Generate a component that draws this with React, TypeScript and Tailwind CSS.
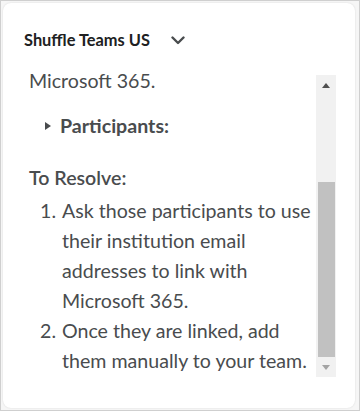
import React from 'react'

// Fake scrollbar drawn by hand so it matches the screenshot regardless of the browser's own.
function ScrollRail() {
  return (
    <div className="mt-[9px] flex h-[302px] w-[20px] shrink-0 flex-col items-center bg-[#f1f1f1]">
      <div className="flex h-[20px] w-full items-center justify-center">
        <svg width="8" height="5" viewBox="0 0 8 5"><path d="M0 5 L4 0 L8 5 Z" fill="#505050" /></svg>
      </div>
      <div className="mt-[87px] h-[175px] w-[17px] bg-[#c1c1c1]" />
      <div className="flex h-[20px] w-full items-center justify-center">
        <svg width="8" height="5" viewBox="0 0 8 5"><path d="M0 0 L8 0 L4 5 Z" fill="#a3a3a3" /></svg>
      </div>
    </div>
  )
}

const steps = [
  'Ask those participants to use their institution email addresses to link with Microsoft 365.',
  'Once they are linked, add them manually to your team.',
]

export default function App() {
  return (
    <div
      className="h-[411px] w-[360px] border border-[#cfcfcf] bg-[#f6f6f6] p-[2px]"
      style={{ fontFamily: 'Lato, "Open Sans", sans-serif' }}
    >
      <div className="h-full w-[352px] rounded-lg bg-white shadow-[0_0_2px_rgba(0,0,0,0.12)]">
        <div className="flex items-center pl-[21px] pt-[27px]">
          <span className="text-[16.4px] font-bold leading-[20px] text-[#202122]">Shuffle Teams US</span>
          <svg className="ml-[21px]" width="14" height="9" viewBox="0 0 14 9" fill="none">
            <path d="M1.5 1.5 L7 7 L12.5 1.5" stroke="#494c4e" strokeWidth="2.4" strokeLinecap="round" strokeLinejoin="round" />
          </svg>
        </div>

        <div className="mt-[16px] flex">
          <div className="h-[311px] w-[313px] overflow-hidden pl-[26px] text-[19.6px] leading-[30px] text-[#494c4e]">
            <p>Microsoft 365.</p>

            <div className="mt-[15px] flex items-center pl-[16px]">
              <svg width="6" height="8" viewBox="0 0 6 8"><path d="M0 0 L6 4 L0 8 Z" fill="#494c4e" /></svg>
              <span className="ml-[9px] font-bold">Participants:</span>
            </div>

            <p className="mt-[22px] font-semibold">To Resolve:</p>

            <ol className="mt-[3px]">
              {steps.map((s, i) => (
                <li key={i} className="flex">
                  <span className="w-[33px] shrink-0 pl-[11px]">{i + 1}.</span>
                  <span>{s}</span>
                </li>
              ))}
            </ol>
          </div>
          <ScrollRail />
        </div>
      </div>
    </div>
  )
}
